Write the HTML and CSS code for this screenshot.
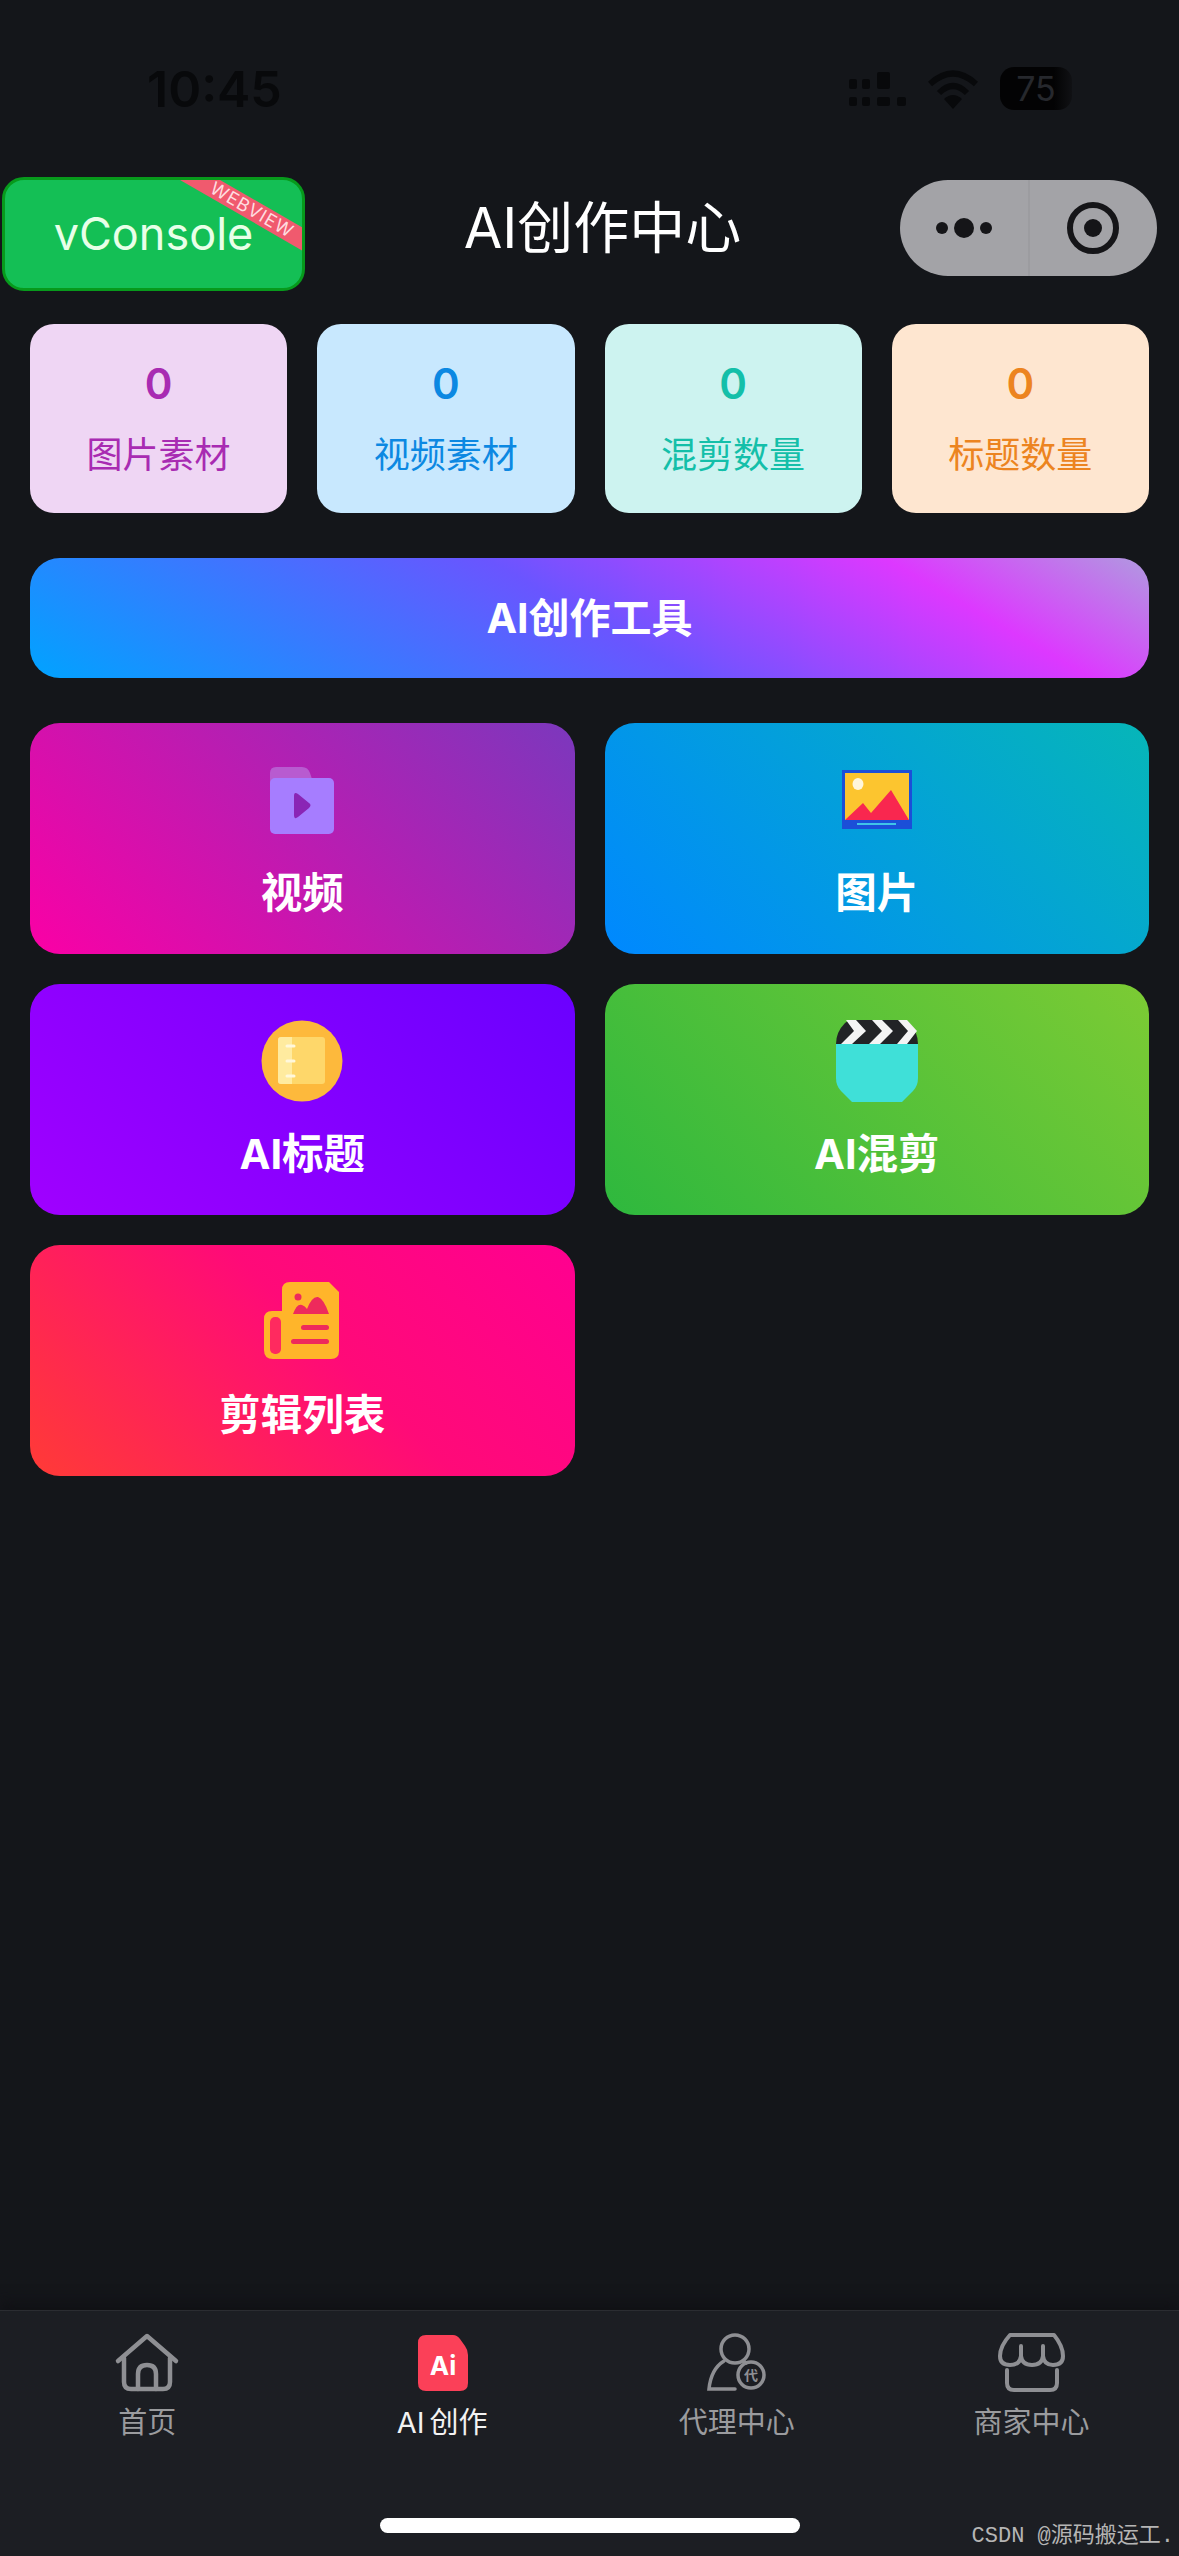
FILE: index.html
```html
<!DOCTYPE html>
<html lang="zh-CN">
<head>
    <meta charset="UTF-8">
    <title>AI创作中心</title>
    <link rel="stylesheet" href="styles.css">
</head>
<body>
    <div class="page">
        <div class="status-bar">
            <span class="time">10:45</span>
            <div class="status-icons">
                <svg class="signal" width="58" height="36" viewBox="0 0 58 36" fill="#08090b">
                    <rect x="0" y="8" width="8" height="10" rx="2"/><rect x="0" y="26" width="8" height="9" rx="2"/>
                    <rect x="13" y="8" width="8" height="10" rx="2"/><rect x="13" y="26" width="8" height="9" rx="2"/>
                    <rect x="28" y="1" width="13" height="17" rx="2"/><rect x="28" y="26" width="13" height="9" rx="2"/>
                    <rect x="48" y="26" width="9" height="9" rx="2"/>
                </svg>
                <svg class="wifi" width="50" height="40" viewBox="0 0 50 40" fill="none" stroke="#08090b" stroke-width="6">
                    <path d="M2 15 Q25 -6 48 15"/>
                    <path d="M11 24 Q25 10 39 24"/>
                    <path d="M25 40 L16 30 Q25 22 34 30 Z" fill="#08090b" stroke="none"/>
                </svg>
                <div class="battery"><span class="battery-level">75</span></div>
            </div>
        </div>

        <div class="title-bar">
            <div class="vconsole">
                vConsole
                <span class="ribbon">WEBVIEW</span>
            </div>
            <div class="page-title">AI创作中心</div>
            <div class="capsule">
                <div class="capsule-half">
                    <svg width="56" height="22" viewBox="0 0 56 22" fill="#151518">
                        <circle cx="6" cy="11" r="6"/><circle cx="28" cy="11" r="10"/><circle cx="50" cy="11" r="6"/>
                    </svg>
                </div>
                <div class="capsule-half">
                    <svg width="54" height="54" viewBox="0 0 54 54" fill="none">
                        <circle cx="27" cy="27" r="23" stroke="#151518" stroke-width="6"/>
                        <circle cx="27" cy="27" r="9" fill="#151518"/>
                    </svg>
                </div>
            </div>
        </div>

        <div class="stats">
            <div class="stat stat-purple"><div class="stat-num">0</div><div class="stat-label">图片素材</div></div>
            <div class="stat stat-blue"><div class="stat-num">0</div><div class="stat-label">视频素材</div></div>
            <div class="stat stat-teal"><div class="stat-num">0</div><div class="stat-label">混剪数量</div></div>
            <div class="stat stat-orange"><div class="stat-num">0</div><div class="stat-label">标题数量</div></div>
        </div>

        <div class="banner">AI创作工具</div>

        <div class="tools">
            <div class="tool tool-video">
                <svg class="tool-icon" width="64" height="82" viewBox="0 0 64 82">
                    <path d="M0 14 Q0 8 6 8 H32 Q38 8 40 14 L44 26 H0 Z" fill="#b85bd0"/>
                    <rect x="0" y="19" width="64" height="56" rx="5" fill="#a67dff"/>
                    <path d="M24 37 Q24 32 28 35 L39 44 Q42 46 39 49 L28 58 Q24 61 24 56 Z" fill="#8a25b5"/>
                </svg>
                <div class="tool-name">视频</div>
            </div>
            <div class="tool tool-image">
                <svg class="tool-icon" width="70" height="82" viewBox="0 0 70 82">
                    <rect x="0" y="11" width="70" height="59" fill="#1b4fd8"/>
                    <rect x="3" y="14" width="64" height="47" fill="#fcc52f"/>
                    <ellipse cx="16" cy="25" rx="5.5" ry="6" fill="#fff6dc"/>
                    <path d="M3 61 L21 44 L29 54 L49 31 L67 61 Z" fill="#f9274f"/>
                    <rect x="15" y="64" width="39" height="2" fill="#3fc4e8"/>
                </svg>
                <div class="tool-name">图片</div>
            </div>
            <div class="tool tool-title">
                <svg class="tool-icon" width="82" height="82" viewBox="0 0 82 82">
                    <circle cx="41" cy="41" r="40.5" fill="#fdb93c"/>
                    <rect x="17" y="17" width="47" height="47" rx="3" fill="#fed76a"/>
                    <path d="M20 17 H31 V64 H20 Q17 64 17 61 V20 Q17 17 20 17 Z" fill="#ffeb9f"/>
                    <path d="M26 26 H33 M26 41 H33 M26 56 H33" stroke="#fff8dc" stroke-width="3" stroke-linecap="round"/>
                </svg>
                <div class="tool-name">AI标题</div>
            </div>
            <div class="tool tool-mix">
                <svg class="tool-icon" width="82" height="82" viewBox="0 0 82 82">
                    <path d="M0 24 Q0 12 9 3 Q12 0 16 0 H66 Q70 0 73 3 Q82 12 82 24 Z" fill="#222326"/>
                    <path d="M10 0 H20 L30 11 L16 24 H5 L18 11 Z" fill="#f4f4f4"/>
                    <path d="M36 0 H46 L57 11 L44 24 H33 L46 11 Z" fill="#f4f4f4"/>
                    <path d="M62 0 H71 L81 11 L71 24 H61 L72 11 Z" fill="#f4f4f4"/>
                    <path d="M0 24 H82 V58 Q82 66 77 71 L66 82 H16 L5 71 Q0 66 0 58 Z" fill="#3fe0d8"/>
                </svg>
                <div class="tool-name">AI混剪</div>
            </div>
            <div class="tool tool-list">
                <svg class="tool-icon" width="76" height="82" viewBox="0 0 76 82">
                    <path d="M26 1 H65 L75 11 V70 Q75 78 67 78 H9 Q0 78 0 69 V38 Q0 30 8 30 H18 V9 Q18 1 26 1 Z" fill="#ffb52a"/>
                    <rect x="6" y="36" width="11" height="37" rx="5" fill="#ff2a5f"/>
                    <circle cx="34" cy="16" r="3.5" fill="#ee2a5c"/>
                    <path d="M29 33 Q33 22 38 24 Q41 25 43 28 Q48 15 54 16 Q60 18 65 33 Z" fill="#ee2a5c"/>
                    <rect x="37" y="44" width="28" height="5" rx="2.5" fill="#ee2a5c"/>
                    <rect x="27" y="58" width="38" height="5" rx="2.5" fill="#ee2a5c"/>
                </svg>
                <div class="tool-name">剪辑列表</div>
            </div>
        </div>

        <div class="tabbar">
            <div class="tab">
                <svg width="70" height="60" viewBox="0 0 70 60" fill="none" stroke="#8e8f93" stroke-width="4.5" stroke-linecap="round" stroke-linejoin="round">
                    <path d="M6 29 L35 4 L64 29"/>
                    <path d="M12 26 V50 Q12 57 19 57 H51 Q58 57 58 50 V26"/>
                    <path d="M26 57 V42 Q26 33 35 33 Q44 33 44 42 V57"/>
                </svg>
                <span class="tab-label">首页</span>
            </div>
            <div class="tab tab-active">
                <svg width="70" height="60" viewBox="0 0 70 60">
                    <path d="M19 3 H46 Q50 3 53 7 L58 14 Q61 18 61 23 V51 Q61 59 53 59 H19 Q11 59 11 51 V11 Q11 3 19 3 Z" fill="#fb4058"/>
                    <text class="ai-mark" x="36" y="43" text-anchor="middle">Ai</text>
                </svg>
                <span class="tab-label tab-label-ai">AI 创作</span>
            </div>
            <div class="tab">
                <svg width="70" height="60" viewBox="0 0 70 60" fill="none" stroke="#8e8f93" stroke-width="3.5" stroke-linecap="round">
                    <circle cx="33" cy="17" r="14"/>
                    <circle cx="49" cy="43" r="13"/>
                    <path d="M22 29 Q9 37 7 57 H33"/>
                    <path d="M41 29 L44 31"/>
                    <text class="agent-mark" x="49" y="48" text-anchor="middle">代</text>
                </svg>
                <span class="tab-label">代理中心</span>
            </div>
            <div class="tab">
                <svg width="70" height="60" viewBox="0 0 70 60" fill="none" stroke="#8e8f93" stroke-width="4" stroke-linecap="round" stroke-linejoin="round">
                    <path d="M13 3 H57 Q66 14 66 24 Q66 33 56 33 Q47 33 46 24 Q45 33 35 33 Q25 33 24 24 Q23 33 13 33 Q3 33 3 24 Q3 14 13 3 Z"/>
                    <path d="M24 24 V14 M46 24 V14"/>
                    <path d="M10 38 V51 Q10 58 17 58 H53 Q60 58 60 51 V38"/>
                </svg>
                <span class="tab-label">商家中心</span>
            </div>
            <div class="home-indicator"></div>
            <div class="watermark">CSDN @源码搬运工.</div>
        </div>
    </div>
</body>
</html>
```

FILE: styles.css
```css
body {
    margin: 0;
    padding: 0;
    background-color: #14161a;
    font-family: Inter, 'Noto Sans CJK SC', sans-serif;
}
.page {
    width: 1179px;
    height: 2556px;
    display: flex;
    flex-direction: column;
    overflow: hidden;
}

/* status bar, nearly black on black in the screenshot */
.status-bar {
    height: 177px;
    flex-shrink: 0;
    display: flex;
    align-items: center;
    justify-content: space-between;
    padding: 0 107px 0 147px;
    box-sizing: border-box;
}
.time {
    font-size: 50px;
    font-weight: 600;
    color: #08090b;
}
.status-icons {
    display: flex;
    align-items: center;
    gap: 22px;
}
.signal {
    margin-right: -1px;
}
.battery {
    width: 72px;
    height: 43px;
    background: linear-gradient(90deg, #030304 75%, #101114);
    border-radius: 14px;
    display: flex;
    align-items: center;
    justify-content: center;
}
.battery-level {
    font-size: 34px;
    color: #26282d;
}

.title-bar {
    height: 114px;
    flex-shrink: 0;
    display: flex;
    align-items: flex-start;
    padding: 0 22px 0 2px;
}
.vconsole {
    position: relative;
    width: 303px;
    height: 114px;
    box-sizing: border-box;
    background: #14bf55;
    border: 3px solid #079a1c;
    border-radius: 22px;
    color: #e8ffe8;
    font-size: 45px;
    line-height: 108px;
    text-align: center;
    overflow: hidden;
}
.ribbon {
    position: absolute;
    top: 20px;
    left: 162px;
    width: 170px;
    height: 20px;
    background: #f05a6e;
    color: #ffdde0;
    font-size: 18px;
    line-height: 20px;
    letter-spacing: 1px;
    text-align: center;
    transform: rotate(30deg);
}
.page-title {
    flex: 1;
    color: #fff;
    font-size: 56px;
    line-height: 102px;
    text-align: center;
}
.capsule {
    width: 257px;
    height: 96px;
    margin-top: 3px;
    border-radius: 48px;
    background: #a3a3a7;
    display: flex;
}
.capsule-half {
    flex: 1;
    display: flex;
    align-items: center;
    justify-content: center;
}
.capsule-half:first-child {
    border-right: 2px solid #9c9ca0;
}

.stats {
    display: grid;
    grid-template-columns: repeat(4, 1fr);
    gap: 30px;
    margin-top: 33px;
    padding: 0 30px;
}
.stat {
    height: 189px;
    border-radius: 24px;
    text-align: center;
    box-sizing: border-box;
    padding-top: 33px;
}
.stat-num {
    font-size: 42px;
    font-weight: 600;
    line-height: 54px;
}
.stat-label {
    font-size: 36px;
    line-height: 50px;
    margin-top: 19px;
}
.stat-purple { background: #efd6f4; color: #a82bb2; }
.stat-blue { background: #c8e8fe; color: #0c88e2; }
.stat-teal { background: #cdf3f0; color: #14bfa9; }
.stat-orange { background: #fee6d0; color: #ec8420; }

.banner {
    height: 120px;
    margin: 45px 30px 0;
    border-radius: 30px;
    background: linear-gradient(30deg, #00a3ff 0%, #6a55ff 50%, #dd38ff 80%, #b09ae0 100%);
    color: #fff;
    font-size: 41px;
    font-weight: 700;
    line-height: 120px;
    text-align: center;
}

.tools {
    display: grid;
    grid-template-columns: 1fr 1fr;
    gap: 30px;
    margin-top: 45px;
    padding: 0 30px;
}
.tool {
    height: 231px;
    border-radius: 30px;
    box-sizing: border-box;
    padding-top: 36px;
    display: flex;
    flex-direction: column;
    align-items: center;
    color: #fff;
}
.tool-icon {
    display: block;
}
.tool-name {
    font-size: 41.5px;
    font-weight: 700;
    line-height: 50px;
    margin-top: 27px;
}
.tool-video { background: linear-gradient(45deg, #fb00a5, #7b38bd); }
.tool-image { background: linear-gradient(45deg, #0088ff, #06b6b8); }
.tool-title { background: linear-gradient(45deg, #a000ff, #6a00ff); }
.tool-mix { background: linear-gradient(45deg, #2eb83e, #7ccb34); }
.tool-list { background: linear-gradient(45deg, #ff3b36, #ff0a78 55%, #ff0090); }

.tabbar {
    position: relative;
    margin-top: auto;
    height: 246px;
    box-sizing: border-box;
    background: #1c1e23;
    border-top: 1px solid #2b2d32;
    box-shadow: 0 -8px 12px #101115;
    display: grid;
    grid-template-columns: repeat(4, 1fr);
}
.tab {
    display: flex;
    flex-direction: column;
    align-items: center;
    padding-top: 21px;
}
.tab svg {
    display: block;
}
.tab-label {
    font-size: 29px;
    line-height: 40px;
    margin-top: 11px;
    color: #9a9b9e;
}
.tab-label-ai {
    word-spacing: -3px;
}
.tab-active .tab-label {
    color: #f2f2f2;
}
.ai-mark {
    font-size: 26px;
    font-weight: 700;
    fill: #fff;
}
.agent-mark {
    font-size: 14px;
    font-weight: 700;
    fill: #8e8f93;
    stroke: none;
}
.home-indicator {
    position: absolute;
    left: 380px;
    top: 207px;
    width: 420px;
    height: 15px;
    border-radius: 8px;
    background: #fff;
}
.watermark {
    position: absolute;
    right: 5px;
    top: 211px;
    font-family: 'Liberation Mono', 'Noto Sans CJK SC', monospace;
    font-size: 22px;
    line-height: 30px;
    color: #b5b5b5;
}
```
